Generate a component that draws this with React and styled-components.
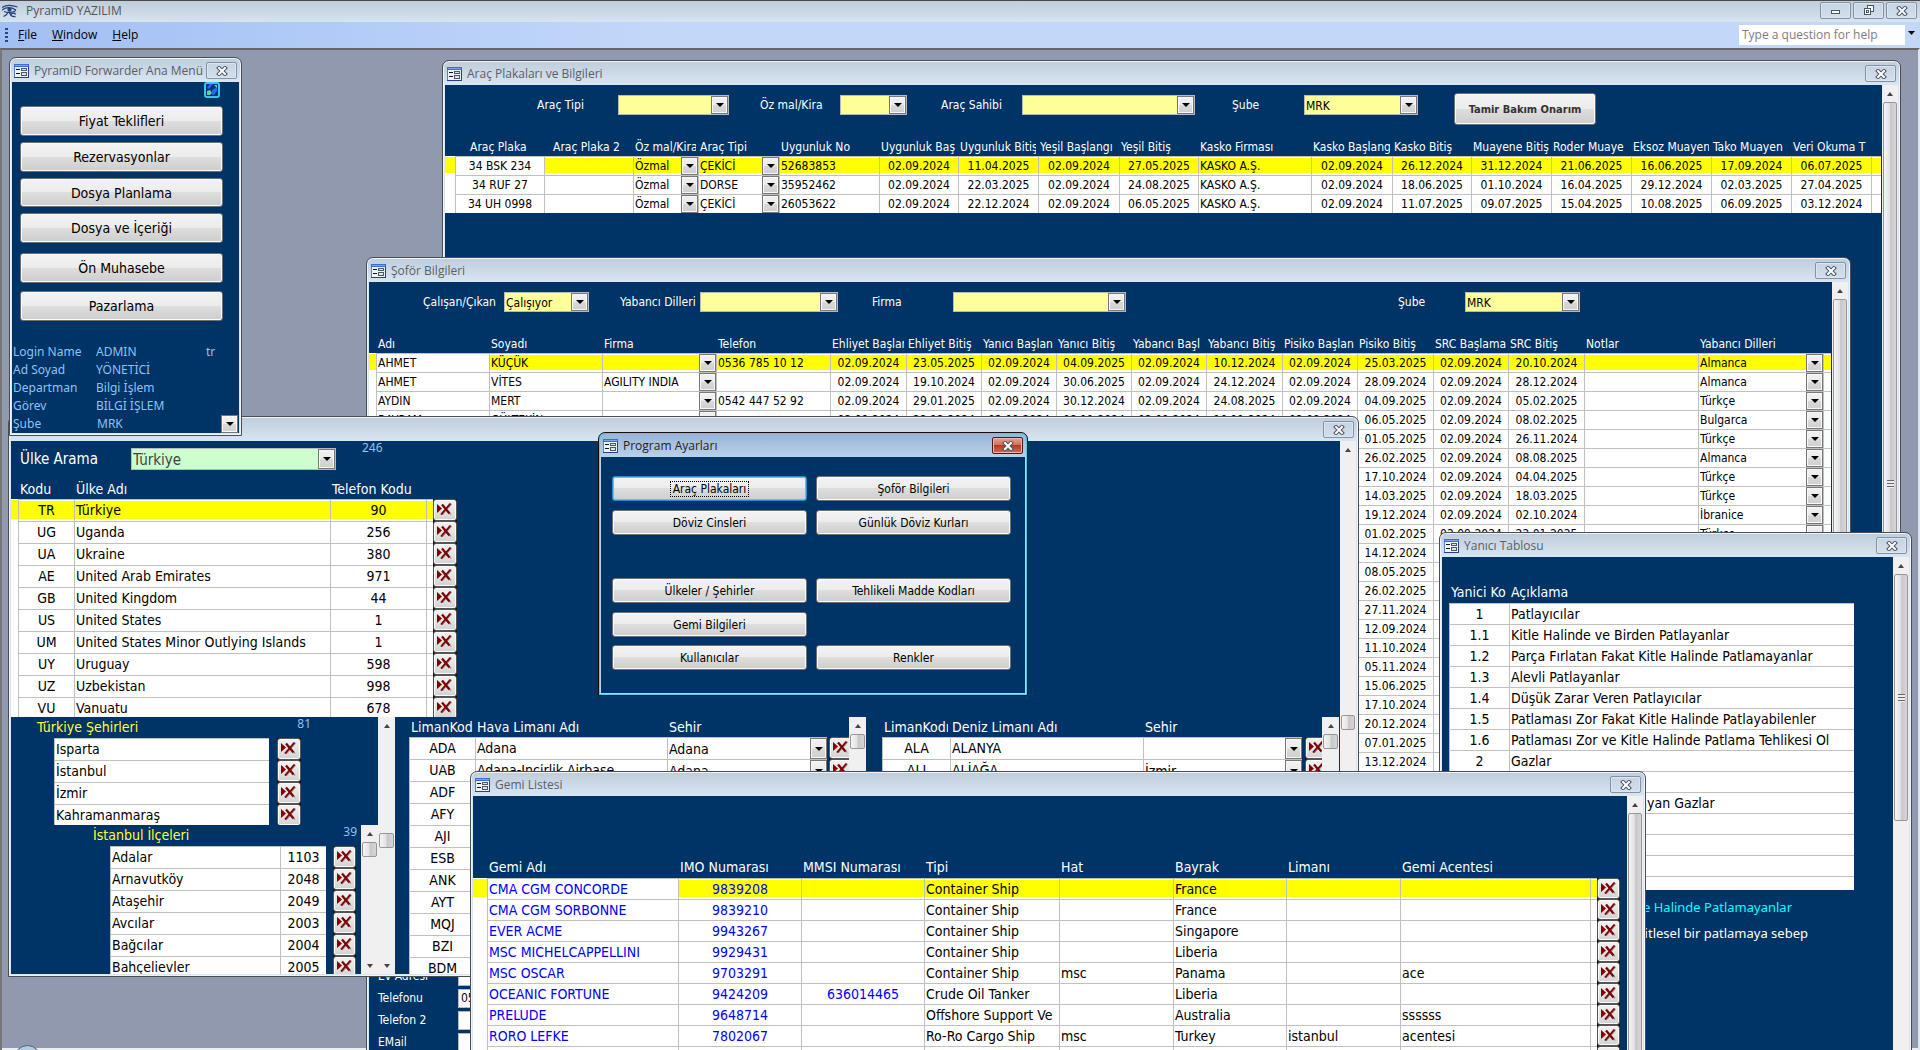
import { useId } from "react";
import styled, { createGlobalStyle, css } from "styled-components";

const NAVY = "#003366";
const TAHOMA = `"DejaVu Sans Condensed", "DejaVu Sans", sans-serif`;
const SEGOE = `"Open Sans", "Noto Sans", sans-serif`;
const CALIBRI = `"Noto Sans", "Open Sans", sans-serif`;

const GlobalStyle = createGlobalStyle`
  *, *::before, *::after {
    box-sizing: border-box;
  }
  body {
    margin: 0;
    overflow: hidden;
    font-family: ${TAHOMA};
    font-size: 12px;
    color: #000;
  }
  button, input, select {
    font: inherit;
    color: inherit;
    margin: 0;
    padding: 0;
    border: 0;
    border-radius: 0;
    background: none;
  }
`;

/* ---------- application shell ---------- */

const Shell = styled.div`
  display: flex;
  flex-direction: column;
  height: 100vh;
`;

const Caption = styled.header`
  display: flex;
  align-items: center;
  gap: 2px;
  height: 22px;
  padding: 0 3px 2px 2px;
  border-top: 1px solid #4b4b4b;
  background: linear-gradient(#bfccda, #d6e3f0);
  h1 {
    flex: 1;
    margin: 0 0 0 6px;
    font: 400 12px/18px ${SEGOE};
    color: #555;
  }
`;

const MenuBar = styled.nav`
  display: flex;
  align-items: center;
  height: 26px;
  padding: 0 3px 0 5px;
  font: 400 12px/20px ${SEGOE};
  background: linear-gradient(90deg, #a2bff4, #c3d8f9 35%);
  button {
    margin-left: 15px;
  }
  button:first-of-type {
    margin-left: 10px;
  }
`;

const Grip = styled.span`
  width: 3px;
  height: 14px;
  background: repeating-linear-gradient(#27477f 0 2px, transparent 2px 4px);
`;

const HelpBox = styled.div`
  display: flex;
  width: 178px;
  height: 20px;
  margin-left: auto;
  background: #c3d8f9;
  input {
    flex: 1;
    min-width: 0;
    padding: 0 3px;
    background: #fff;
  }
  input::placeholder {
    color: #7d7d7d;
    opacity: 1;
  }
  && button {
    width: 12px;
    margin: 0;
    font-size: 0;
  }
`;

const Desktop = styled.main`
  position: relative;
  flex: 1;
  overflow: hidden;
  border-top: 2px solid #666;
  border-left: 2px solid #777;
  border-right: 2px solid #dfe6ee;
  background: #9199af;
`;

const StatusStrip = styled.div`
  position: absolute;
  left: 0;
  right: 0;
  bottom: 0;
  height: 2px;
  background: #eee;
`;

const Orb = styled.div`
  position: absolute;
  left: 12px;
  bottom: -22px;
  width: 27px;
  height: 27px;
  border: 1px solid #46617c;
  border-radius: 50%;
  background: #b5cbdf;
`;

/* ---------- windows ---------- */

const Frame = styled.section`
  position: absolute;
  left: ${({ $x }) => $x}px;
  top: ${({ $y }) => $y}px;
  width: ${({ $w }) => $w}px;
  height: ${({ $h }) => $h}px;
  display: flex;
  flex-direction: column;
  padding: 0 2px 2px;
  border: 1px solid #4a4d52;
  border-radius: 7px 7px 0 0;
  background: linear-gradient(#bfccda, #d8e5f2 24px);
  box-shadow: inset 0 0 0 1px #eef4fa;
  overflow: hidden;
  ${({ $active }) =>
    $active &&
    css`
      border-color: #111;
      background: linear-gradient(#98b4d4, #bad1ea 24px);
      box-shadow: inset 0 0 0 1px #3fd2f0;
    `}
`;

const TitleBar = styled.header`
  display: flex;
  align-items: center;
  flex: none;
  height: 24px;
  padding: 1px 2px 0 2px;
  h2 {
    flex: 1;
    margin: 0 0 0 5px;
    font: 400 12px/18px ${SEGOE};
    color: ${({ $active }) => ($active ? "#222" : "#5a5f66")};
    white-space: nowrap;
  }
`;

const ChromeButton = styled.button`
  display: flex;
  align-items: center;
  justify-content: center;
  flex: none;
  width: 31px;
  height: 17px;
  border: 1px solid #8391a5;
  border-radius: 2px;
  background: ${({ $red }) =>
    $red ? "linear-gradient(#e5a193, #d5705c 45%, #bd3620 50%, #d3695a)" : "linear-gradient(#c6d3e1, #d3dfec)"};
  box-shadow: inset 0 0 0 1px ${({ $red }) => ($red ? "#f0b5aa" : "#dbe6f1")};
  ${({ $red }) => $red && "border-color: #4b1a1a;"}
`;

const Body = styled.div`
  display: flex;
  flex: 1;
  min-height: 0;
  background: ${NAVY};
  color: #fff;
`;

const Pane = styled.div`
  flex: 1;
  min-width: 0;
  overflow: hidden;
`;

function FormIcon() {
  return (
    <svg width="15" height="14" viewBox="0 0 15 14" aria-hidden="true" shapeRendering="crispEdges">
      <rect width="15" height="14" fill="#5f7fc4" />
      <path d="M0 13h15v1H0zM14 3h1v11h-1z" fill="#27407f" />
      <rect x="1" y="3" width="13" height="10" fill="#eef3fb" />
      <rect width="15" height="3" fill="#3b6bd6" />
      <rect x="1" y="1" width="13" height="1" fill="#7ba2ee" />
      <path d="M2 5h4v1H2zM2 9h4v1H2z" fill="#111" />
      <path d="M7 4h6v3H7zM7 8h6v4H7z" fill="#4f5663" />
      <path d="M8 5h4v1H8zM8 9h4v2H8z" fill="#dfe4ec" />
    </svg>
  );
}

function CloseGlyph() {
  return (
    <svg width="12" height="10" viewBox="0 0 12 10" aria-hidden="true">
      <path d="M3 2l6 6M9 2L3 8" stroke="#4c5564" strokeWidth="4" strokeLinecap="square" />
      <path d="M3 2l6 6M9 2L3 8" stroke="#fff" strokeWidth="2" strokeLinecap="square" />
    </svg>
  );
}

function Window({ title, x, y, w, h, active, children }) {
  return (
    <Frame $x={x} $y={y} $w={w} $h={h} $active={active} aria-label={title || "Ülkeler"}>
      <TitleBar $active={active}>
        {title && <FormIcon />}
        <h2>{title}</h2>
        <ChromeButton $red={active} aria-label="Kapat">
          <CloseGlyph />
        </ChromeButton>
      </TitleBar>
      <Body>{children}</Body>
    </Frame>
  );
}

/* ---------- scroll bar ---------- */

const Track = styled.div`
  display: flex;
  flex-direction: column;
  flex: none;
  width: ${({ $w }) => $w || 16}px;
  overflow: hidden;
  background: #f0f0f0;
`;

const Step = styled.button`
  flex: none;
  height: 17px;
  &::before {
    content: "";
    display: block;
    width: 0;
    margin: 0 auto;
    border: 3px solid transparent;
    border-top-width: 0;
    border-bottom: 4px solid #444;
  }
  &:last-child::before {
    transform: rotate(180deg);
  }
`;

const Thumb = styled.div`
  display: flex;
  align-items: center;
  justify-content: center;
  flex: none;
  height: ${({ $size }) => $size}px;
  margin: ${({ $at }) => $at}px 1px auto;
  border: 1px solid #979797;
  border-radius: 2px;
  background: linear-gradient(90deg, #f5f5f5, #e3e3e3 45%, #c8c8cc 55%, #d6d6d8);
  &::before {
    content: "";
    width: 7px;
    height: ${({ $size }) => ($size > 40 ? 8 : 0)}px;
    background: repeating-linear-gradient(#666 0 1px, #eee 1px 3px);
  }
`;

function Scroll({ at = 0, size, width }) {
  return (
    <Track $w={width}>
      <Step aria-label="Yukarı" />
      <Thumb $at={at} $size={size} />
      <Step aria-label="Aşağı" />
    </Track>
  );
}

/* ---------- controls ---------- */

const ComboWrap = styled.span`
  display: flex;
  width: ${({ $w }) => ($w ? `${$w}px` : "100%")};
  height: ${({ $h }) => ($h ? `${$h}px` : "100%")};
  background: ${({ $bg }) => $bg || "transparent"};
  color: ${({ $ink }) => $ink || "#000"};
  border: ${({ $bg }) => ($bg ? "1px solid #b8b8b8" : "0")};
  select {
    flex: 1;
    min-width: 0;
    padding: 0 1px;
    appearance: none;
    outline: 0;
  }
`;

const Arrow = styled.span`
  display: flex;
  align-items: center;
  justify-content: center;
  flex: none;
  width: 17px;
  border: 1px solid #777;
  background: linear-gradient(#f2f2f2, #ebebeb 48%, #d9d9d9 52%, #cfcfcf);
  box-shadow: inset 0 0 0 1px #f7f7f7;
  pointer-events: none;
  &::before {
    content: "";
    border: 4px solid transparent;
    border-bottom: 0;
    border-top-color: #000;
  }
`;

function Combo({ id, name, value = "", ...box }) {
  return (
    <ComboWrap {...box}>
      <select id={id} aria-label={id ? undefined : name} defaultValue={value}>
        <option>{value}</option>
      </select>
      <Arrow />
    </ComboWrap>
  );
}

const FilterBar = styled.div`
  display: flex;
  align-items: flex-start;
  height: 53px;
  padding-top: 8px;
`;

const FieldWrap = styled.div`
  display: flex;
  margin: 2px 0 0 ${({ $before }) => $before}px;
  line-height: 20px;
  label {
    width: ${({ $label }) => $label}px;
    white-space: nowrap;
  }
`;

function Filter({ label, before, labelWidth, width, value }) {
  const id = useId();
  return (
    <FieldWrap $before={before} $label={labelWidth}>
      <label htmlFor={id}>{label}</label>
      <Combo id={id} value={value} $w={width} $h={20} $bg="#ffff99" />
    </FieldWrap>
  );
}

const PushButton = styled.button`
  height: ${({ $h }) => $h || 25}px;
  border: 1px solid #707070;
  border-radius: 3px;
  background: linear-gradient(#f3f3f3, #ececec 49%, #dedede 50%, #cdcdcd);
  box-shadow: inset 0 0 0 1px #fbfbfb;
  color: #000;
  ${({ $focused }) =>
    $focused &&
    css`
      border-color: #2a8dc0;
      box-shadow: inset 0 0 0 1px #46cdf2;
      span {
        padding: 0 2px;
        outline: 1px dotted #000;
      }
    `}
`;

const RepairButton = styled(PushButton)`
  width: 142px;
  height: 32px;
  margin-left: 36px;
  font-weight: 700;
  font-size: 11px;
  color: #333;
`;

/* ---------- data grid ---------- */

const Table = styled.table`
  flex: none;
  width: ${({ $w }) => $w}px;
  table-layout: fixed;
  border-spacing: 0;
  font-size: ${({ $size }) => $size}px;
  th {
    height: ${({ $head }) => $head}px;
    padding: 0 0 0 2px;
    border-right: 2px solid ${NAVY};
    font-weight: 400;
    text-align: left;
    white-space: nowrap;
    overflow: hidden;
    color: #fff;
  }
  tbody tr {
    height: ${({ $row }) => $row}px;
  }
  td {
    padding-bottom: ${({ $row }) => ($row > 21 ? 2 : 0)}px;
  }
`;

const Cell = styled.td`
  height: inherit;
  padding: 0 0 0 ${({ $align }) => ($align ? 0 : 1)}px;
  border: solid #c0c0c0;
  border-width: 1px 0 0 1px;
  background-color: #fff;
  color: ${({ $ink }) => $ink || "#000"};
  text-align: ${({ $align }) => $align || "left"};
  line-height: 16px;
  white-space: nowrap;
  overflow: hidden;
  ${({ $kind }) => $kind === "sel" && "border-width: 0;"}
  ${({ $kind }) => $kind === "drop" && "&& { padding: 0; }"}
  ${({ $kind }) =>
    ($kind === "gap" || $kind === "del") &&
    css`
      && {
        padding: 0;
      }
      border-width: 0;
      background-color: ${$kind === "del" ? "#111" : "transparent"};
    `}
  ${({ $lit }) =>
    $lit &&
    css`
      background-image: linear-gradient(#ffff00, #ffff00);
      background-size: 100% calc(100% - 3px);
      background-position: 0 1px;
      background-repeat: no-repeat;
    `}
`;

const DeleteButton = styled.button`
  display: flex;
  align-items: flex-start;
  width: 100%;
  height: ${({ $h }) => $h}px;
  padding: 3px 0 0 3px;
  border: 1px solid #555;
  border-radius: 3px;
  background: linear-gradient(#f2f2f2, #e4e4e4 50%, #d2d2d2);
  box-shadow: inset 0 0 0 1px #fafafa;
  overflow: hidden;
`;

function DeleteIcon() {
  return (
    <svg width="15" height="12" viewBox="0 0 15 12" aria-hidden="true">
      <path d="M0 1v9l5-4.500z" fill="#800000" />
      <path d="M6 2l8 9.500M14.500 1L5 12" stroke="#8f8f8f" strokeWidth="1.200" />
      <path d="M5 1.500l7.500 9" stroke="#800000" strokeWidth="2.200" />
      <path d="M13.500 .5L4 11.500" stroke="#800000" strokeWidth="1.800" />
    </svg>
  );
}

function Grid({ cols, rows, head, row, size, active, focus, label }) {
  const total = cols.reduce((sum, c) => sum + c.w, 0);
  return (
    <Table $w={total} $head={head} $row={row} $size={size} aria-label={label}>
      <colgroup>
        {cols.map((c, i) => (
          <col key={i} width={c.w} />
        ))}
      </colgroup>
      {head && (
        <thead>
          <tr>
            {cols.map((c, i) => (
              <th key={i}>{c.title}</th>
            ))}
          </tr>
        </thead>
      )}
      <tbody>
        {rows.map((cells, r) => {
          let n = 0;
          return (
            <tr key={r}>
              {cols.map((c, i) => {
                const plain = !c.kind || c.kind === "drop";
                const value = plain ? cells[n++] : null;
                const lit = active === r && i !== focus && c.kind !== "gap" && c.kind !== "del";
                return (
                  <Cell key={i} $kind={c.kind} $align={c.align} $ink={c.ink} $lit={lit}>
                    {c.kind === "drop" && <Combo name={c.title} value={value} $h={row - 1} />}
                    {c.kind === "del" && (
                      <DeleteButton $h={row} aria-label="Sil">
                        <DeleteIcon />
                      </DeleteButton>
                    )}
                    {!c.kind && value}
                  </Cell>
                );
              })}
            </tr>
          );
        })}
      </tbody>
    </Table>
  );
}

const Indent = styled.span`
  padding-left: ${({ $by }) => $by}px;
`;

/* ---------- data ---------- */

const S = "02.09.2024";

const vehicleCols = [
  { w: 10, kind: "sel" },
  { w: 89, title: <Indent $by={13}>Araç Plaka</Indent>, align: "center" },
  { w: 89, title: <Indent $by={7}>Araç Plaka 2</Indent> },
  { w: 65, title: "Öz mal/Kira", kind: "drop" },
  { w: 81, title: "Araç Tipi", kind: "drop" },
  { w: 100, title: "Uygunluk No" },
  { w: 79, title: "Uygunluk Baş", align: "center" },
  { w: 80, title: "Uygunluk Bitiş", align: "center" },
  { w: 81, title: "Yeşil Başlangı", align: "center" },
  { w: 79, title: "Yeşil Bitiş", align: "center" },
  { w: 113, title: "Kasko Firması" },
  { w: 81, title: "Kasko Başlang", align: "center" },
  { w: 79, title: "Kasko Bitiş", align: "center" },
  { w: 80, title: "Muayene Bitiş", align: "center" },
  { w: 80, title: "Roder Muaye", align: "center" },
  { w: 80, title: "Eksoz Muayen", align: "center" },
  { w: 80, title: "Tako Muayen", align: "center" },
  { w: 80, title: "Veri Okuma T", align: "center" },
  { w: 10, kind: "blank" },
];

const vehicles = [
  ["34 BSK 234", "", "Özmal", "ÇEKİCİ", "52683853", S, "11.04.2025", S, "27.05.2025", "KASKO A.Ş.", S, "26.12.2024", "31.12.2024", "21.06.2025", "16.06.2025", "17.09.2024", "06.07.2025"],
  ["34 RUF 27", "", "Özmal", "DORSE", "35952462", S, "22.03.2025", S, "24.08.2025", "KASKO A.Ş.", S, "18.06.2025", "01.10.2024", "16.04.2025", "29.12.2024", "02.03.2025", "27.04.2025"],
  ["34 UH 0998", "", "Özmal", "ÇEKİCİ", "26053622", S, "22.12.2024", S, "06.05.2025", "KASKO A.Ş.", S, "11.07.2025", "09.07.2025", "15.04.2025", "10.08.2025", "06.09.2025", "03.12.2024"],
];

const driverCols = [
  { w: 7, kind: "sel" },
  { w: 113, title: "Adı" },
  { w: 113, title: "Soyadı" },
  { w: 114, title: "Firma", kind: "drop" },
  { w: 114, title: "Telefon" },
  { w: 76, title: "Ehliyet Başlan", align: "center" },
  { w: 75, title: "Ehliyet Bitiş", align: "center" },
  { w: 75, title: "Yanıcı Başlan", align: "center" },
  { w: 75, title: "Yanıcı Bitiş", align: "center" },
  { w: 75, title: "Yabancı Başl", align: "center" },
  { w: 76, title: "Yabancı Bitiş", align: "center" },
  { w: 75, title: "Pisiko Başlan", align: "center" },
  { w: 76, title: "Pisiko Bitiş", align: "center" },
  { w: 75, title: "SRC Başlama", align: "center" },
  { w: 76, title: "SRC Bitiş", align: "center" },
  { w: 114, title: "Notlar" },
  { w: 125, title: "Yabancı Dilleri", kind: "drop" },
  { w: 8, kind: "blank" },
];

const drivers = [
  ["AHMET", "KÜÇÜK", "", "0536 785 10 12", S, "23.05.2025", S, "04.09.2025", S, "10.12.2024", S, "25.03.2025", S, "20.10.2024", "", "Almanca"],
  ["AHMET", "VİTES", "AGILITY INDIA", "", S, "19.10.2024", S, "30.06.2025", S, "24.12.2024", S, "28.09.2024", S, "28.12.2024", "", "Almanca"],
  ["AYDIN", "MERT", "", "0542 447 52 92", S, "29.01.2025", S, "30.12.2024", S, "24.08.2025", S, "04.09.2025", S, "05.02.2025", "", "Türkçe"],
  ["BAYRAM", "GÜLTEKİN", "", "", S, "22.12.2024", S, "08.11.2024", S, "10.11.2024", S, "06.05.2025", S, "08.02.2025", "", "Bulgarca"],
  ...[
    ["01.05.2025", "26.11.2024", "Türkçe"],
    ["26.02.2025", "08.08.2025", "Almanca"],
    ["17.10.2024", "04.04.2025", "Türkçe"],
    ["14.03.2025", "18.03.2025", "Türkçe"],
    ["19.12.2024", "02.10.2024", "İbranice"],
    ["01.02.2025", "22.01.2025", "Türkçe"],
    ["14.12.2024"],
    ["08.05.2025"],
    ["26.02.2025"],
    ["27.11.2024"],
    ["12.09.2024"],
    ["11.10.2024"],
    ["05.11.2024"],
    ["15.06.2025"],
    ["17.10.2024"],
    ["20.12.2024"],
    ["07.01.2025"],
    ["13.12.2024"],
  ].map(([test, src, lang]) => ["", "", "", "", "", "", "", "", "", "", "", test, src ? S : "", src, "", lang]),
];

const countryCols = [
  { w: 7, kind: "sel" },
  { w: 56, title: "Kodu", align: "center" },
  { w: 256, title: "Ülke Adı" },
  { w: 96, title: "Telefon Kodu", align: "center" },
  { w: 7, kind: "blank" },
  { w: 24, kind: "del" },
];

const countries = [
  ["TR", "Türkiye", "90"],
  ["UG", "Uganda", "256"],
  ["UA", "Ukraine", "380"],
  ["AE", "United Arab Emirates", "971"],
  ["GB", "United Kingdom", "44"],
  ["US", "United States", "1"],
  ["UM", "United States Minor Outlying Islands", "1"],
  ["UY", "Uruguay", "598"],
  ["UZ", "Uzbekistan", "998"],
  ["VU", "Vanuatu", "678"],
];

const cityCols = [{ w: 215 }, { w: 8, kind: "gap" }, { w: 24, kind: "del" }];
const cities = [["Isparta"], ["İstanbul"], ["İzmir"], ["Kahramanmaraş"]];

const districtCols = [{ w: 170 }, { w: 46, align: "center" }, { w: 7, kind: "gap" }, { w: 23, kind: "del" }];
const districts = [
  ["Adalar", "1103"],
  ["Arnavutköy", "2048"],
  ["Ataşehir", "2049"],
  ["Avcılar", "2003"],
  ["Bağcılar", "2004"],
  ["Bahçelievler", "2005"],
];

const airportCols = [
  { w: 66, title: "LimanKod", align: "center" },
  { w: 192, title: "Hava Limanı Adı" },
  { w: 160, title: "Sehir", kind: "drop" },
  { w: 2, kind: "gap" },
  { w: 24, kind: "del" },
];
const airports = [
  ["ADA", "Adana", "Adana"],
  ["UAB", "Adana-Incirlik Airbase", "Adana"],
  ...["ADF", "AFY", "AJI", "ESB", "ANK", "AYT", "MQJ", "BZI", "BDM"].map((code) => [code, "", ""]),
];

const seaportCols = [
  { w: 68, title: "LimanKodı", align: "center" },
  { w: 193, title: "Deniz Limanı Adı" },
  { w: 159, title: "Sehir", kind: "drop" },
  { w: 3, kind: "gap" },
  { w: 24, kind: "del" },
];
const seaports = [
  ["ALA", "ALANYA", ""],
  ["ALI", "ALİAĞA", "İzmir"],
];

const hazardCols = [
  { w: 60, title: "Yanici Ko", align: "center" },
  { w: 345, title: "Açıklama" },
];
const hazards = [
  ["1", "Patlayıcılar"],
  ["1.1", "Kitle Halinde ve Birden Patlayanlar"],
  ["1.2", "Parça Fırlatan Fakat Kitle Halinde Patlamayanlar"],
  ["1.3", "Alevli Patlayanlar"],
  ["1.4", "Düşük Zarar Veren Patlayıcılar"],
  ["1.5", "Patlaması Zor Fakat Kitle Halinde Patlayabilenler"],
  ["1.6", "Patlaması Zor ve Kitle Halinde Patlama Tehlikesi Ol"],
  ["2", "Gazlar"],
  ["2.1", ""],
  ["2.2", "Yanıcı ve Zehirli Olmayan Gazlar"],
  ["", ""],
  ["", ""],
  ["", ""],
  ["", ""],
];

const shipCols = [
  { w: 14, kind: "sel" },
  { w: 191, title: "Gemi Adı", ink: "#0000ff" },
  { w: 123, title: "IMO Numarası", align: "center", ink: "#0000ff" },
  { w: 123, title: "MMSI Numarası", align: "center", ink: "#0000ff" },
  { w: 135, title: "Tipi" },
  { w: 114, title: "Hat" },
  { w: 113, title: "Bayrak" },
  { w: 114, title: "Limanı" },
  { w: 190, title: "Gemi Acentesi" },
  { w: 7, kind: "blank" },
  { w: 23, kind: "del" },
];
const ships = [
  ["CMA CGM CONCORDE", "9839208", "", "Container Ship", "", "France", "", ""],
  ["CMA CGM SORBONNE", "9839210", "", "Container Ship", "", "France", "", ""],
  ["EVER ACME", "9943267", "", "Container Ship", "", "Singapore", "", ""],
  ["MSC MICHELCAPPELLINI", "9929431", "", "Container Ship", "", "Liberia", "", ""],
  ["MSC OSCAR", "9703291", "", "Container Ship", "msc", "Panama", "", "ace"],
  ["OCEANIC FORTUNE", "9424209", "636014465", "Crude Oil Tanker", "", "Liberia", "", ""],
  ["PRELUDE", "9648714", "", "Offshore Support Ve", "", "Australia", "", "ssssss"],
  ["RORO LEFKE", "7802067", "", "Ro-Ro Cargo Ship", "msc", "Turkey", "istanbul", "acentesi"],
  ["", "", "", "", "", "", "", ""],
];

/* ---------- window contents ---------- */

const MainMenu = styled.div`
  position: relative;
  display: flex;
  flex-direction: column;
  flex: 1;
  padding: 24px 16px 0 8px;
  font-size: 14px;
  button {
    margin-bottom: 6px;
  }
  button:nth-of-type(4) {
    margin-bottom: 10px;
  }
  button:nth-of-type(5) {
    margin-bottom: 8px;
  }
`;

const Globe = styled.svg`
  position: absolute;
  top: 0;
  right: 19px;
`;

const LoginInfo = styled.dl`
  display: grid;
  grid-template-columns: 83px 110px 1fr;
  margin: 16px -15px 0 -7px;
  font: 400 12px/18px ${CALIBRI};
  color: #8fc1f2;
  dd {
    margin: 0;
    white-space: nowrap;
  }
`;

const Branch = styled.dd`
  display: flex;
  justify-content: space-between;
  grid-column: 2 / 4;
  height: 18px;
`;

const SettingsGrid = styled.div`
  display: grid;
  grid-template-columns: 195px 195px;
  grid-template-rows: 25px 25px 25px 25px 24px 25px;
  gap: 9px;
  flex: 1;
  padding: 19px 0 0 11px;
`;

const Setting = styled(PushButton)`
  grid-column: ${({ $col }) => $col};
  grid-row: ${({ $row }) => $row};
`;

const SearchRow = styled.div`
  display: flex;
  height: 38px;
  padding: 7px 0 0 9px;
  font-size: 15px;
  line-height: 22px;
  label {
    width: 111px;
  }
`;

const Count = styled.span`
  font: 400 12px/14px ${CALIBRI};
  color: #8fc1f2;
`;

const TopCount = styled(Count)`
  margin: -7px 0 0 26px;
`;

const CountryPane = styled.div`
  height: 276px;
  overflow: hidden;
`;

const LowerRow = styled.div`
  display: flex;
  height: 257px;
`;

const CityPane = styled.div`
  display: flex;
  flex: none;
  width: 384px;
  margin-right: 14px;
  overflow: hidden;
`;

const CityHead = styled.div`
  display: flex;
  justify-content: space-between;
  width: ${({ $w }) => $w}px;
  height: 20px;
  margin: 0 0 1px ${({ $indent }) => $indent}px;
  font-size: 14px;
  line-height: 20px;
  color: #ffff33;
`;

const CityTable = styled.div`
  height: ${({ $h }) => $h}px;
  margin-left: ${({ $indent }) => $indent}px;
  overflow: hidden;
`;

const DistrictRow = styled.div`
  display: flex;
  height: 149px;
`;

const PortPane = styled.div`
  display: flex;
  flex: none;
  width: 457px;
  margin-right: 16px;
`;

const HazardPane = styled(Pane)`
  padding: 24px 0 0 7px;
`;

const HazardTable = styled.div`
  height: 309px;
  overflow: hidden;
`;

const HazardNote = styled.p`
  width: ${({ $w }) => $w}px;
  margin: 8px 0 0;
  font: 400 13px/18px ${CALIBRI};
  text-align: right;
  color: ${({ $ink }) => $ink};
`;

const ShipPane = styled(Pane)`
  padding-top: 60px;
`;

const Details = styled.div`
  display: grid;
  grid-template-columns: 80px 280px;
  grid-auto-rows: 19px;
  align-content: start;
  row-gap: 3px;
  padding: 196px 0 0 9px;
  line-height: 19px;
  input {
    min-width: 0;
    padding: 0 2px;
    border: 1px solid #b8b8b8;
    background: #fff;
    color: #000;
  }
`;

function Detail({ label, value = "" }) {
  const id = useId();
  return (
    <>
      <label htmlFor={id}>{label}</label>
      <input id={id} defaultValue={value} />
    </>
  );
}

function Logo() {
  return (
    <svg width="16" height="14" viewBox="0 0 16 14" fill="none" stroke="#24427c" strokeWidth="1.300" aria-hidden="true">
      <path d="M0 3.500C4 .8 9 .8 15.500 3M0 6c4-3 9-3 14 0M2 7.500c4 1.500 8 1.500 12-1" />
      <path d="M5.500 8c0 2-1.500 3.500-4 4.500M7.500 8.500c1 3 3.500 4.500 6 4M9 10.500c1-2 4-2 4.500 0" />
      <circle cx="7.500" cy="5.500" r="1.500" fill="#24427c" />
    </svg>
  );
}

export default function App() {
  const countryId = useId();
  return (
    <Shell>
      <GlobalStyle />
      <Caption>
        <Logo />
        <h1>PyramiD YAZILIM</h1>
        <ChromeButton aria-label="Minimize">
          <svg width="11" height="9" viewBox="0 0 11 9" aria-hidden="true">
            <rect x="1.500" y="4.500" width="8" height="3" fill="#fff" stroke="#4c5564" />
          </svg>
        </ChromeButton>
        <ChromeButton aria-label="Restore">
          <svg width="11" height="11" viewBox="0 0 11 11" fill="#fff" stroke="#4c5564" aria-hidden="true">
            <rect x="4.500" y=".5" width="6" height="6" />
            <rect x="1.500" y="3.500" width="6" height="6" />
            <rect x="3.500" y="5.500" width="2" height="2" />
          </svg>
        </ChromeButton>
        <ChromeButton aria-label="Close">
          <CloseGlyph />
        </ChromeButton>
      </Caption>
      <MenuBar>
        <Grip />
        <button><u>F</u>ile</button>
        <button><u>W</u>indow</button>
        <button><u>H</u>elp</button>
        <HelpBox>
          <input aria-label="Help" placeholder="Type a question for help" />
          <button aria-label="Open help list">
            <svg width="7" height="4" viewBox="0 0 7 4" aria-hidden="true"><path d="M0 0h7L3.500 4z" /></svg>
          </button>
        </HelpBox>
      </MenuBar>
      <Desktop>
        <StatusStrip />
        <Orb />

        <Window title="Araç Plakaları ve Bilgileri" x={440} y={10} w={1459} h={900}>
          <Pane>
            <FilterBar>
              <Filter label="Araç Tipi" before={92} labelWidth={81} width={111} />
              <Filter label="Öz mal/Kira" before={31} labelWidth={80} width={67} />
              <Filter label="Araç Sahibi" before={34} labelWidth={81} width={173} />
              <Filter label="Şube" before={37} labelWidth={72} width={114} value="MRK" />
              <RepairButton>Tamir Bakım Onarım</RepairButton>
            </FilterBar>
            <Grid label="Araçlar" cols={vehicleCols} rows={vehicles} head={18} row={19} size={12} active={0} focus={1} />
          </Pane>
          <Scroll size={764} />
        </Window>

        <Window title="Şoför Bilgileri" x={364} y={207} w={1485} h={900}>
          <Pane>
            <FilterBar>
              <Filter label="Çalışan/Çıkan" before={54} labelWidth={81} width={85} value="Çalışıyor" />
              <Filter label="Yabancı Dilleri" before={31} labelWidth={80} width={138} />
              <Filter label="Firma" before={34} labelWidth={81} width={173} />
              <Filter label="Şube" before={272} labelWidth={67} width={115} value="MRK" />
            </FilterBar>
            <Grid label="Şoförler" cols={driverCols} rows={drivers} head={18} row={19} size={12} active={0} focus={1} />
            <Details>
              <Detail label="Ev Adresi" />
              <Detail label="Telefonu" value="0536 785 10 12" />
              <Detail label="Telefon 2" />
              <Detail label="EMail" />
            </Details>
          </Pane>
          <Scroll size={700} />
        </Window>

        <Window title="Yanıcı Tablosu" x={1437} y={482} w={473} h={560}>
          <HazardPane>
            <HazardTable>
              <Grid label="Yanıcı maddeler" cols={hazardCols} rows={hazards} head={22} row={21} size={14} />
            </HazardTable>
            <HazardNote $w={343} $ink="#00ffff">Parça Fırlatan Fakat Kitle Halinde Patlamayanlar</HazardNote>
            <HazardNote $w={359} $ink="#fff">Sadece küçük kısmı kitlesel bir patlamaya sebep</HazardNote>
          </HazardPane>
          <Scroll size={247} />
        </Window>

        <Window x={6} y={366} w={1351} h={561}>
          <Pane>
            <CountryPane>
              <SearchRow>
                <label htmlFor={countryId}>Ülke Arama</label>
                <Combo id={countryId} value="Türkiye" $w={205} $h={22} $bg="#ccffcc" $ink="#444" />
                <TopCount>246</TopCount>
              </SearchRow>
              <Grid label="Ülkeler" cols={countryCols} rows={countries} head={20} row={22} size={14} active={0} />
            </CountryPane>
            <LowerRow>
              <CityPane>
                <Pane>
                  <CityHead $indent={26} $w={274}>
                    Türkiye Şehirleri <Count>81</Count>
                  </CityHead>
                  <CityTable $indent={43} $h={87}>
                    <Grid label="Şehirler" cols={cityCols} rows={cities} row={22} size={14} />
                  </CityTable>
                  <DistrictRow>
                    <Pane>
                      <CityHead $indent={82} $w={264}>
                        İstanbul İlçeleri <Count>39</Count>
                      </CityHead>
                      <CityTable $indent={99} $h={128}>
                        <Grid label="İlçeler" cols={districtCols} rows={districts} row={22} size={14} />
                      </CityTable>
                    </Pane>
                    <Scroll width={17} size={15} />
                  </DistrictRow>
                </Pane>
                <Scroll width={17} at={99} size={15} />
              </CityPane>
              <PortPane>
                <Pane>
                  <Grid label="Hava limanları" cols={airportCols} rows={airports} head={20} row={22} size={14} />
                </Pane>
                <Scroll width={17} size={15} />
              </PortPane>
              <PortPane>
                <Pane>
                  <Grid label="Deniz limanları" cols={seaportCols} rows={seaports} head={20} row={22} size={14} />
                </Pane>
                <Scroll width={17} size={15} />
              </PortPane>
            </LowerRow>
          </Pane>
          <Scroll at={257} size={15} />
        </Window>

        <Window title="PyramiD Forwarder Ana Menü" x={7} y={7} w={233} h={379}>
          <MainMenu>
            <Globe width="16" height="16" viewBox="0 0 16 16" aria-hidden="true">
              <rect x="1" y="1" width="14" height="14" rx="2" fill="#0a2f78" stroke="#35c8ea" strokeWidth="2" />
              <path d="M3 5l3-3h3L5 7zM8 8l5-3v4l-3 4H8z" fill="#1f6cf0" />
              <path d="M3 9l3-1 2 3-2 2H3zM10 3h3v3z" fill="#5bd69a" />
            </Globe>
            <PushButton $h={30}>Fiyat Teklifleri</PushButton>
            <PushButton $h={30}>Rezervasyonlar</PushButton>
            <PushButton $h={30}>Dosya Planlama</PushButton>
            <PushButton $h={30}>Dosya ve İçeriği</PushButton>
            <PushButton $h={30}>Ön Muhasebe</PushButton>
            <PushButton $h={30}>Pazarlama</PushButton>
            <LoginInfo>
              <dt>Login Name</dt>
              <dd>ADMIN</dd>
              <dd>tr</dd>
              <dt>Ad Soyad</dt>
              <Branch>YÖNETİCİ</Branch>
              <dt>Departman</dt>
              <Branch>Bilgi İşlem</Branch>
              <dt>Görev</dt>
              <Branch>BİLGİ İŞLEM</Branch>
              <dt>Şube</dt>
              <Branch>
                <Combo name="Şube" value="MRK" $ink="#8fc1f2" />
              </Branch>
            </LoginInfo>
          </MainMenu>
        </Window>

        <Window title="Program Ayarları" x={596} y={382} w={430} h={264} active>
          <SettingsGrid>
            <Setting $col={1} $row={1} $focused><span>Araç Plakaları</span></Setting>
            <Setting $col={2} $row={1}>Şoför Bilgileri</Setting>
            <Setting $col={1} $row={2}>Döviz Cinsleri</Setting>
            <Setting $col={2} $row={2}>Günlük Döviz Kurları</Setting>
            <Setting $col={1} $row={4}>Ülkeler / Şehirler</Setting>
            <Setting $col={2} $row={4}>Tehlikeli Madde Kodları</Setting>
            <Setting $col={1} $row={5}>Gemi Bilgileri</Setting>
            <Setting $col={1} $row={6}>Kullanıcılar</Setting>
            <Setting $col={2} $row={6}>Renkler</Setting>
          </SettingsGrid>
        </Window>

        <Window title="Gemi Listesi" x={468} y={721} w={1176} h={400}>
          <ShipPane>
            <Grid label="Gemiler" cols={shipCols} rows={ships} head={22} row={21} size={14} active={0} focus={1} />
          </ShipPane>
          <Scroll size={600} />
        </Window>
      </Desktop>
    </Shell>
  );
}
